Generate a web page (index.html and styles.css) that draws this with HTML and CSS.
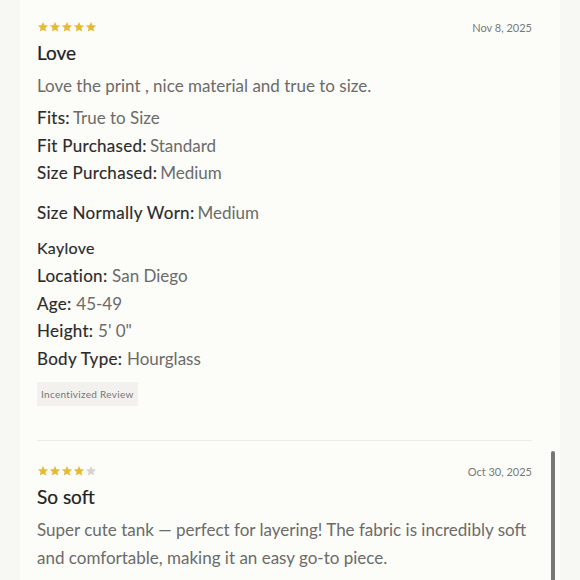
FILE: index.html
```html
<!DOCTYPE html>
<html>
<head>
  <title>Reviews</title>
  <link rel="stylesheet" href="styles.css">
</head>
<body>
  <div class="panel">
    <div class="review">
      <div class="review-top">
        <div class="stars">
          <svg class="star on" viewBox="0 0 24 24"><path d="M12 1.8l3 6.6 7.2.7-5.4 4.9 1.6 7.1L12 17.4l-6.4 3.7 1.6-7.1L1.8 9.1 9 8.4z"/></svg>
          <svg class="star on" viewBox="0 0 24 24"><path d="M12 1.8l3 6.6 7.2.7-5.4 4.9 1.6 7.1L12 17.4l-6.4 3.7 1.6-7.1L1.8 9.1 9 8.4z"/></svg>
          <svg class="star on" viewBox="0 0 24 24"><path d="M12 1.8l3 6.6 7.2.7-5.4 4.9 1.6 7.1L12 17.4l-6.4 3.7 1.6-7.1L1.8 9.1 9 8.4z"/></svg>
          <svg class="star on" viewBox="0 0 24 24"><path d="M12 1.8l3 6.6 7.2.7-5.4 4.9 1.6 7.1L12 17.4l-6.4 3.7 1.6-7.1L1.8 9.1 9 8.4z"/></svg>
          <svg class="star on" viewBox="0 0 24 24"><path d="M12 1.8l3 6.6 7.2.7-5.4 4.9 1.6 7.1L12 17.4l-6.4 3.7 1.6-7.1L1.8 9.1 9 8.4z"/></svg>
        </div>
        <div class="date">Nov 8, 2025</div>
      </div>
      <h3 class="title">Love</h3>
      <p class="body">Love the print , nice material and true to size.</p>

      <div class="fit">
        <div class="row"><span class="label">Fits:</span><span class="value">True to Size</span></div>
        <div class="row"><span class="label">Fit Purchased:</span><span class="value">Standard</span></div>
        <div class="row"><span class="label">Size Purchased:</span><span class="value">Medium</span></div>
        <div class="row worn"><span class="label">Size Normally Worn:</span><span class="value">Medium</span></div>
      </div>

      <div class="author">
        <div class="name">Kaylove</div>
        <div class="row"><span class="label">Location: </span><span class="value">San Diego</span></div>
        <div class="row"><span class="label">Age: </span><span class="value">45-49</span></div>
        <div class="row"><span class="label">Height: </span><span class="value">5' 0"</span></div>
        <div class="row"><span class="label">Body Type: </span><span class="value">Hourglass</span></div>
      </div>

      <span class="badge">Incentivized Review</span>
    </div>

    <div class="review">
      <div class="review-top">
        <div class="stars">
          <svg class="star on" viewBox="0 0 24 24"><path d="M12 1.8l3 6.6 7.2.7-5.4 4.9 1.6 7.1L12 17.4l-6.4 3.7 1.6-7.1L1.8 9.1 9 8.4z"/></svg>
          <svg class="star on" viewBox="0 0 24 24"><path d="M12 1.8l3 6.6 7.2.7-5.4 4.9 1.6 7.1L12 17.4l-6.4 3.7 1.6-7.1L1.8 9.1 9 8.4z"/></svg>
          <svg class="star on" viewBox="0 0 24 24"><path d="M12 1.8l3 6.6 7.2.7-5.4 4.9 1.6 7.1L12 17.4l-6.4 3.7 1.6-7.1L1.8 9.1 9 8.4z"/></svg>
          <svg class="star on" viewBox="0 0 24 24"><path d="M12 1.8l3 6.6 7.2.7-5.4 4.9 1.6 7.1L12 17.4l-6.4 3.7 1.6-7.1L1.8 9.1 9 8.4z"/></svg>
          <svg class="star" viewBox="0 0 24 24"><path d="M12 1.8l3 6.6 7.2.7-5.4 4.9 1.6 7.1L12 17.4l-6.4 3.7 1.6-7.1L1.8 9.1 9 8.4z"/></svg>
        </div>
        <div class="date">Oct 30, 2025</div>
      </div>
      <h3 class="title">So soft</h3>
      <p class="body">Super cute tank — perfect for layering! The fabric is incredibly soft and comfortable, making it an easy go-to piece.</p>
    </div>
  </div>
  <div class="scrollbar"></div>
</body>
</html>
```

FILE: styles.css
```css
html, body {
  margin: 0;
  height: 100%;
  overflow: hidden;
}

body {
  font-family: Lato, "Open Sans", sans-serif;
  background-color: #f7f7f3;
}

.panel {
  margin-left: 20px;
  width: 540px;
  height: 100%;
  overflow: hidden;
  background-color: #fcfcf9;
  padding: 0 28px 0 17px;
  box-sizing: border-box;
}

.review {
  padding: 18px 0 34px;
  border-bottom: 1px solid #ecece8;
}

.review + .review {
  padding-top: 21px;
}

.review-top {
  display: flex;
  justify-content: space-between;
  align-items: center;
  height: 18px;
}

.stars {
  display: flex;
}

.star {
  width: 12px;
  height: 12px;
  fill: #d4d4d1;
}

.star.on {
  fill: #e6b937;
}

.date {
  font-size: 11px;
  color: #7a7a78;
}

.title {
  margin: 4px 0 0;
  font-size: 19px;
  font-weight: 400;
  -webkit-text-stroke: 0.2px #222;
  color: #222;
  line-height: 26px;
}

.body {
  margin: 6px 0 0;
  font-size: 17px;
  line-height: 28px;
  color: #6b6b69;
}

.fit {
  margin-top: 4px;
}

.row {
  font-size: 17px;
  line-height: 27.5px;
}

.fit .label {
  margin-right: 3px;
}

.row.worn {
  margin-top: 12px;
}

.label {
  color: #2a2a2a;
  letter-spacing: 0.3px;
  -webkit-text-stroke: 0.15px #2a2a2a;
}

.value {
  color: #6b6b69;
}

.author {
  margin-top: 8px;
}

.name {
  font-size: 16px;
  line-height: 28px;
  color: #2a2a2a;
  letter-spacing: 0.3px;
  -webkit-text-stroke: 0.15px #2a2a2a;
}

.badge {
  display: inline-block;
  margin-top: 10px;
  padding: 6px 4px;
  background-color: #f2f1ee;
  color: #777;
  font-size: 10px;
  letter-spacing: 0.3px;
}

.scrollbar {
  position: absolute;
  left: 551px;
  top: 451px;
  width: 4px;
  height: 129px;
  background-color: #777;
  border-radius: 2px 2px 0 0;
}
```
